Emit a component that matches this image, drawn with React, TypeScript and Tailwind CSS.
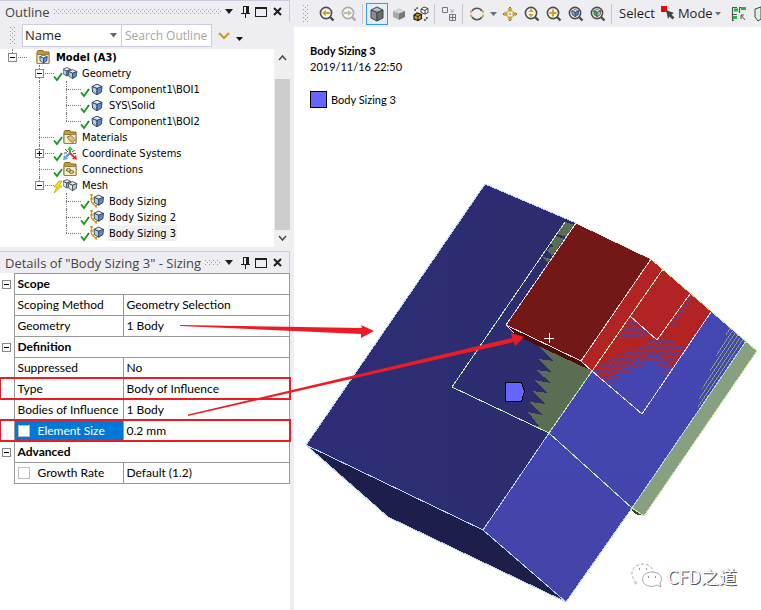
import React from "react";

const UI = "font-['Open_Sans','Noto_Sans',sans-serif]";
const PANEL = "font-['Lato','Noto_Sans_CJK_SC',sans-serif]";

function Grip() {
  return (
    <svg className="shrink-0" width="6" height="18" aria-hidden="true">
      <defs>
        <pattern id="grip" width="4" height="4" patternUnits="userSpaceOnUse">
          <rect width="1" height="1" fill="#999" />
          <rect x="2" y="2" width="1" height="1" fill="#999" />
        </pattern>
      </defs>
      <rect width="6" height="18" fill="url(#grip)" />
    </svg>
  );
}

function TitleBar({ title }: { title: string }) {
  return (
    <header className="flex h-[22px] items-center border-t border-r border-[#ccccdc] bg-[#eeeef2] pl-[5px] pr-1 text-[#444]">
      <h2 className={`${UI} text-[13px] leading-5 whitespace-nowrap`}>{title}</h2>
      <svg className="ml-1 h-[5px] min-w-0 flex-1" aria-hidden="true">
        <rect width="100%" height="5" fill="url(#grip)" />
      </svg>
      <div className="flex shrink-0 items-center text-[#1e1e1e]">
        <button type="button" aria-label="Window options" className="w-4 pl-1">
          <svg width="9" height="5"><path d="M0 0h8L4 5z" fill="currentColor" /></svg>
        </button>
        <button type="button" aria-label="Pin" className="w-4 pl-1">
          <svg width="9" height="12" shapeRendering="crispEdges">
            <path d="M2 0h6v7h1v1H5v4H4V8H0V7h2zM3 1v6h2V1z" fill="currentColor" fillRule="evenodd" />
          </svg>
        </button>
        <button type="button" aria-label="Maximize" className="w-4 pl-0.5">
          <svg width="12" height="10" shapeRendering="crispEdges">
            <path d="M0 0h12v10H0zM1 2v7h10V2z" fill="#1e1e1e" fillRule="evenodd" />
          </svg>
        </button>
        <button type="button" aria-label="Close" className="w-4 pl-1">
          <svg width="9" height="9"><path d="M1 1l7 7M8 1L1 8" stroke="currentColor" strokeWidth="2" /></svg>
        </button>
      </div>
    </header>
  );
}

function Cube({ x = 0, y = 0, s = 1, front = "#4f8fe8", side = "#a9cdf7", top = "#dcebfb" }) {
  return (
    <g transform={`translate(${x} ${y}) scale(${s})`} stroke="#3c4450" strokeWidth="1" strokeLinejoin="round">
      <path d="M1 3L6 .7 11 3 6 5z" fill={top} />
      <path d="M1 3L6 5v6.3L1.6 8.6z" fill={side} />
      <path d="M11 3L6 5v6.3L10.4 8.6z" fill={front} />
    </g>
  );
}

function Folder({ children }: { children: React.ReactNode }) {
  return (
    <>
      <path d="M1 13V2l1-1.500h5l1 1.500h5v11z" fill="#c79a2a" stroke="#8a6a1c" />
      <path d="M1 4.500h12V13.500H1z" fill="#f7edc0" stroke="#8f8250" />
      {children}
    </>
  );
}

function TreeIcon({ kind }: { kind: string }) {
  return (
    <svg className="w-[15px] shrink-0" width="15" height="15" aria-hidden="true">
      {kind === "model" && <Folder><Cube x={3} y={4.5} s={0.75} /></Folder>}
      {kind === "materials" && (
        <Folder><path d="M4 7l4-1.500 4 4-2 3-3-1.500z" fill="#efb680" stroke="#7d6540" strokeWidth=".8" /></Folder>
      )}
      {kind === "connections" && (
        <Folder>
          <ellipse cx="5.500" cy="8" rx="2.200" ry="1.400" fill="#e0cf98" stroke="#7d6a30" />
          <ellipse cx="8.500" cy="10" rx="2.200" ry="1.400" fill="#e0cf98" stroke="#7d6a30" />
        </Folder>
      )}
      {kind === "geometry" && <><Cube x={-1} y={1} s={0.8} /><Cube x={4.500} y={3} s={0.85} /></>}
      {kind === "mesh" && (
        <>
          <Cube x={-1} y={1} s={0.8} front="#b6c4d4" side="#d8e2ee" />
          <Cube x={4.500} y={3} s={0.85} front="#b6c4d4" side="#e2eaf2" />
        </>
      )}
      {kind === "solid" && <Cube x={1} y={1.5} />}
      {kind === "sizing" && (
        <>
          <path d="M1.500 0v8L7 13.500M0 1h3M0 5h3M2 10l2-1M5 13l2-2" fill="none" stroke="#c89b2c" strokeWidth="1.400" />
          <Cube x={3} y={0.5} s={0.95} />
        </>
      )}
      {kind === "axes" && (
        <>
          <path d="M7 7V3" stroke="#2fae3c" strokeWidth="2" />
          <path d="M4 4l3-4 3 4z" fill="#25d23a" />
          <path d="M7 7l-4 4" stroke="#4a8ee0" strokeWidth="2" />
          <path d="M0 14l1-5 4 4z" fill="#5aa0f2" />
          <path d="M7 7l4 4" stroke="#d33" strokeWidth="2" />
          <path d="M14 13.500L9 13l4-4z" fill="#e22" />
          <path d="M2 3l3 3M12 4L9 6M1 7h3M10 7.500h3" stroke="#555" />
        </>
      )}
    </svg>
  );
}

type Guide = "none" | "line" | "tee" | "end";
type Row = { name: string; icon: string; guides: Guide[]; toggle?: "+" | "-"; state?: "ok" | "bolt" };

const tree: Row[] = [
  { name: "Model (A3)", icon: "model", guides: ["end"], toggle: "-" },
  { name: "Geometry", icon: "geometry", guides: ["none", "tee"], toggle: "-", state: "ok" },
  { name: "Component1\\BOI1", icon: "solid", guides: ["none", "line", "tee"], state: "ok" },
  { name: "SYS\\Solid", icon: "solid", guides: ["none", "line", "tee"], state: "ok" },
  { name: "Component1\\BOI2", icon: "solid", guides: ["none", "line", "end"], state: "ok" },
  { name: "Materials", icon: "materials", guides: ["none", "tee"], state: "ok" },
  { name: "Coordinate Systems", icon: "axes", guides: ["none", "tee"], toggle: "+", state: "ok" },
  { name: "Connections", icon: "connections", guides: ["none", "tee"], state: "ok" },
  { name: "Mesh", icon: "mesh", guides: ["none", "end"], toggle: "-", state: "bolt" },
  { name: "Body Sizing", icon: "sizing", guides: ["none", "none", "tee"], state: "ok" },
  { name: "Body Sizing 2", icon: "sizing", guides: ["none", "none", "tee"], state: "ok" },
  { name: "Body Sizing 3", icon: "sizing", guides: ["none", "none", "end"], state: "ok" },
];

function Toggle({ sign, name }: { sign: "+" | "-"; name: string }) {
  return (
    <button type="button" aria-label={`Toggle ${name}`} className="block size-[9px] border border-[#888] bg-white">
      <svg width="7" height="7" className="block" shapeRendering="crispEdges">
        <path d={sign === "+" ? "M1 3h5v1H1zM3 1h1v5H3z" : "M1 3h5v1H1z"} fill="#000" />
      </svg>
    </button>
  );
}

function TreeRow({ row }: { row: Row }) {
  const root = row.guides.length === 1;
  const selected = row.name === "Body Sizing 3";
  return (
    <li className="flex h-4 items-center">
      {row.guides.map((g, i) => (
        <span key={i} className="relative h-4 w-[27px] shrink-0">
          {(g === "line" || g === "tee") && <span className="absolute top-0 left-3 h-4 border-l border-dotted border-[#777]" />}
          {g === "end" && <span className="absolute top-0 left-3 h-2 border-l border-dotted border-[#777]" />}
          {(g === "tee" || g === "end") && <span className="absolute top-2 right-0 left-3 border-t border-dotted border-[#777]" />}
          {row.toggle && i === row.guides.length - 1 && (
            <span className="absolute top-1 left-2"><Toggle sign={row.toggle} name={row.name} /></span>
          )}
        </span>
      ))}
      <svg className="w-[9px] shrink-0 overflow-visible" width="9" height="16" aria-hidden="true">
        {row.state === "ok" && <path d="M0 11.500l3 3.500L8 8" fill="none" stroke="#12941a" strokeWidth="1.800" />}
        {row.state === "bolt" && <path d="M5 4L0 10h3l-3 6 8-7H5l3-5z" fill="#ffe11a" stroke="#b89410" strokeWidth=".7" />}
      </svg>
      <TreeIcon kind={row.icon} />
      <span className={`ml-[3px] h-4 px-px leading-[18px] ${root ? "pl-0.5 font-bold" : ""} ${selected ? "bg-[#f0f0f0]" : ""}`}>{row.name}</span>
    </li>
  );
}

function Outline() {
  return (
    <section className="bg-[#eeeef2]">
      <TitleBar title="Outline" />
      <div className={`${UI} flex h-[27px] items-center pl-2.5 text-[13px] text-[#1e1e1e]`}>
        <Grip />
        <span className="relative ml-1.5 flex h-[23px] w-[100px] border border-[#ccccdc] bg-white">
          <select aria-label="Filter by" className="w-full appearance-none bg-white pl-0.5 outline-none">
            <option>Name</option>
          </select>
          <svg className="pointer-events-none absolute top-2 right-1" width="7" height="5"><path d="M0 0h7L3.500 4.500z" fill="#666" /></svg>
        </span>
        <input
          aria-label="Search Outline"
          placeholder="Search Outline"
          className="h-[23px] w-[90px] border border-l-0 border-[#ccccdc] bg-white pl-[3px] text-xs outline-none placeholder:text-[#a5a5a5]"
        />
        <button type="button" aria-label="Expand search" className="ml-1.5">
          <svg width="12" height="8"><path d="M1 1l5 5 5-5" fill="none" stroke="#cf9a14" strokeWidth="2" /></svg>
        </button>
        <button type="button" aria-label="More" className="ml-1.5 pt-1.5">
          <svg width="7" height="4"><path d="M0 0h7L3.500 4z" fill="#111" /></svg>
        </button>
      </div>
      <div className="flex bg-white">
        <ul className="min-w-0 flex-1 pb-1.5 font-['DejaVu_Sans_Condensed','Noto_Sans',sans-serif] text-[11px] text-black">
          {tree.map((row) => <TreeRow key={row.name} row={row} />)}
        </ul>
        <div className="flex w-4 shrink-0 flex-col items-center bg-[#f0f0f0] text-[#505050]">
          <svg width="15" height="30"><path d="M4 11l3.500-4L11 11" fill="none" stroke="currentColor" strokeWidth="1.600" /></svg>
          <div className="w-[15px] flex-1 bg-[#cdcdcd]" />
          <svg width="15" height="17"><path d="M4 6l3.500 4L11 6" fill="none" stroke="currentColor" strokeWidth="1.600" /></svg>
        </div>
      </div>
    </section>
  );
}

type Detail = { label: string; value?: string; box?: boolean; active?: boolean };
const details: Detail[] = [
  { label: "Scope" },
  { label: "Scoping Method", value: "Geometry Selection" },
  { label: "Geometry", value: "1 Body" },
  { label: "Definition" },
  { label: "Suppressed", value: "No" },
  { label: "Type", value: "Body of Influence" },
  { label: "Bodies of Influence", value: "1 Body" },
  { label: "Element Size", value: "0.2 mm", box: true, active: true },
  { label: "Advanced" },
  { label: "Growth Rate", value: "Default (1.2)", box: true },
];

function Details() {
  return (
    <section className="mt-1 bg-white">
      <TitleBar title={'Details of "Body Sizing 3" - Sizing'} />
      <table className={`${PANEL} w-full table-fixed border-collapse text-xs leading-5 text-black`}>
        <colgroup>
          <col className="w-[14px]" />
          <col className="w-[109px]" />
          <col />
        </colgroup>
        <tbody>
          {details.map((d) => (
            <tr key={d.label} className="h-[21px]">
              <td className="p-0">
                {!d.value && <span className="ml-0.5 block"><Toggle sign="-" name={d.label} /></span>}
              </td>
              {d.value ? (
                <>
                  <th scope="row" className={`border border-[#999] p-0 text-left font-normal whitespace-nowrap ${d.active ? "bg-[#0078d7] text-white" : ""}`}>
                    {d.box ? (
                      <label className="flex h-5 items-center gap-2 pl-[3px]">
                        <input type="checkbox" className="size-3 appearance-none border border-[#bbb] bg-white" />
                        {d.label}
                      </label>
                    ) : (
                      <span className="block h-5 pl-[3px]">{d.label}</span>
                    )}
                  </th>
                  <td className="border border-[#999] p-0 pl-[3px]">{d.value}</td>
                </>
              ) : (
                <th colSpan={2} scope="rowgroup" className="border border-[#999] p-0 pl-[3px] text-left font-bold">{d.label}</th>
              )}
            </tr>
          ))}
        </tbody>
      </table>
    </section>
  );
}

function Tool({ label, active, children }: { label: string; active?: boolean; children: React.ReactNode }) {
  return (
    <button
      type="button"
      aria-label={label}
      className={`flex h-[22px] w-[22px] shrink-0 items-center justify-center ${active ? "border border-[#3399ff] bg-[#e4eefb]" : ""}`}
    >
      <svg width="16" height="16" className="shrink-0">{children}</svg>
    </button>
  );
}

function Sep() {
  return <span className="mr-[3px] ml-0.5 h-5 w-px shrink-0 bg-[#c4c6d0]" />;
}

function Lens({ color = "#4b4b4b", children }: { color?: string; children: React.ReactNode }) {
  return (
    <>
      <circle cx="7" cy="7" r="5.600" fill="#faf6ea" stroke={color} strokeWidth="1.600" />
      <path d="M11 11l3.500 3.500" stroke={color} strokeWidth="2.400" />
      {children}
    </>
  );
}

function Toolbar() {
  return (
    <div className={`${UI} flex h-[27px] items-center overflow-hidden bg-[#eeeef2] pl-[9px] text-[13px] text-[#1e1e1e]`}>
      <Grip />
      <span className="w-[7px] shrink-0" />
      <Tool label="Previous view"><Lens><path d="M3 7l4-3v2h4v2H7v2z" fill="#d3a021" /></Lens></Tool>
      <Tool label="Next view"><Lens color="#aaa"><path d="M11 7L7 4v2H3v2h4v2z" fill="#bbb" /></Lens></Tool>
      <Sep />
      <Tool label="Shaded with edges" active>
        <path d="M2 4l6-3 6 3-6 2.500z" fill="#bbb" stroke="#444" />
        <path d="M2 4l6 2.500V15l-6-3z" fill="#8c8c8c" stroke="#444" />
        <path d="M14 4L8 6.500V15l6-3z" fill="#6a6a6a" stroke="#444" />
      </Tool>
      <Tool label="Shaded">
        <path d="M2 5l6-3 6 3-6 2.500z" fill="#d5d5d5" />
        <path d="M2 5l6 2.500V14l-6-3z" fill="#aaa" />
        <path d="M14 5L8 7.500V14l6-3z" fill="#777" />
      </Tool>
      <Tool label="Wireframe">
        <path d="M8 3l3-2 4 1.500v4L12 8 8 6.500zM8 3l4 1.500 3-2M12 4.500V8" fill="#fff" stroke="#444" />
        <path d="M1 9l3-2 4.500 1.500v4L5 14.500 1 13z" fill="#d3a021" stroke="#222" strokeWidth="1.200" />
        <path d="M1 9l4 1.500 3.500-2M5 10.500v4" fill="none" stroke="#222" />
        <path d="M2 5q0-3 3-3M14 11q0 3-3 3" fill="none" stroke="#444" strokeWidth="1.500" strokeDasharray="2 1" />
      </Tool>
      <Sep />
      <Tool label="Show mesh">
        <path d="M1.500 1.500h5v5h-5zM8.500 8.500h6v6h-6zM11.500 8.500v6M8.500 11.500h6" fill="none" stroke="#777" />
        <path d="M9 3l3 3M12 3.500V6H9.500" fill="none" stroke="#aaa" />
      </Tool>
      <Sep />
      <Tool label="Rotate">
        <path d="M3 5a6 6 0 0 1 10 0" fill="none" stroke="#555" strokeWidth="1.600" />
        <path d="M3 11a6 6 0 0 0 10 0" fill="none" stroke="#555" strokeWidth="1.600" />
        <path d="M2 4.500v7M14 4.500v7" stroke="#d3a021" strokeWidth="1.600" strokeDasharray="2.500 1.500" />
      </Tool>
      <svg className="mx-[2px] shrink-0" width="7" height="4"><path d="M0 0h7L3.500 4z" fill="#66707e" /></svg>
      <Tool label="Pan">
        <path d="M8 1l3 4.500H5zM8 15l3-4.500H5zM1 8l4.500-3v6zM15 8l-4.500-3v6z" fill="#d3a021" />
        <path d="M6.500 2.500L8 1l1.500 1.500M6.500 13.500L8 15l1.500-1.500M2.500 6.500L1 8l1.500 1.500M13.500 6.500L15 8l-1.500 1.500M7 8h2" stroke="#777" fill="none" />
      </Tool>
      <Tool label="Zoom"><Lens><path d="M7 2.500L9.500 6h-5zM7 11.500L4.500 8h5z" fill="#d3a021" /></Lens></Tool>
      <Tool label="Box zoom"><Lens><path d="M7 3.500v7M3.500 7h7" stroke="#d3a021" strokeWidth="2" /></Lens></Tool>
      <Tool label="Zoom to fit"><Lens><Cube x={3} y={2.800} s={0.7} front="#3f7fc5" side="#6ea4dd" /></Lens></Tool>
      <Tool label="Look at"><Lens><Cube x={3} y={2.800} s={0.7} front="#bbb" side="#1fc43a" /></Lens></Tool>
      <Sep />
      <span className="ml-1 shrink-0">Select</span>
      <button type="button" className="ml-1.5 flex shrink-0 items-center">
        <svg width="15" height="15">
          <path d="M0 0h6v6H0z" fill="#f00" />
          <path d="M5 4l8 3-2.500 1.500 3 3-2 2-3-3L7 13z" fill="#444" />
        </svg>
        <span className="ml-0.5">Mode</span>
        <svg className="ml-0.5" width="6" height="4"><path d="M0 0h6L3 3.500z" fill="#66707e" /></svg>
      </button>
      <span className="w-[7px] shrink-0" />
      <Tool label="Select by faces">
        <path d="M1.500 2v13M8.500 2v5M1 1.500h5M8 1.500h3M1 8.500h5M1 14.500h2M3 4h3" stroke="#555" fill="none" strokeWidth="1.200" />
        <path d="M3 2.500h4v3H3zM10 1h5v3h-5zM2 10h4v3H2z" fill="#0fc52a" />
        <path d="M10 9l4 5M10 9v4M10 9h3" stroke="#555" />
      </Tool>
      <Tool label="Select bodies"><path d="M2 3l6-2v12l-3 2-3-4z" fill="#dff2df" stroke="#444" /></Tool>
    </div>
  );
}

function Scene() {
  return (
    <svg className="absolute top-0 left-0" width="467" height="583" viewBox="294 27 467 583" shapeRendering="crispEdges" role="img" aria-label="Body sizing model">
      <defs>
        <linearGradient id="deep" x1="0" x2="1"><stop offset="0" stopColor="#2e2e78" /><stop offset="1" stopColor="#2c2c6c" /></linearGradient>
        <linearGradient id="bright" x1="0" x2="0" y1="0" y2="1"><stop offset="0" stopColor="#4747b6" /><stop offset="1" stopColor="#4343a8" /></linearGradient>
        <pattern id="blueDots" width="4" height="6" patternUnits="userSpaceOnUse">
          <path d="M0 0h1v2H0zM3 2h1v1H3zM2 3h1v2H2zM1 5h1v1H1z" fill="#4747b6" />
        </pattern>
        <pattern id="redDots" width="4" height="6" patternUnits="userSpaceOnUse">
          <path d="M0 0h1v2H0zM3 2h1v1H3zM2 3h1v2H2zM1 5h1v1H1z" fill="#b22424" />
        </pattern>
        <pattern id="greenDots" width="4" height="6" patternUnits="userSpaceOnUse">
          <path d="M0 0h1v2H0zM3 2h1v1H3zM2 3h1v2H2zM1 5h1v1H1z" fill="#8aa481" />
        </pattern>
      </defs>
      <path d="M485 184L576 223 592 371 549 433 483 530 306 445z" fill="url(#deep)" />
      <path d="M306 445l177 85 83 72-178-85z" fill="#1e1e4a" />
      <path d="M592 371L663 269 746 341 632 508 566 602 483 530z" fill="url(#bright)" />
      <path d="M746 341l11 10-113 165-12-8z" fill="#88a080" />
      <path d="M632 508l12 8-9-2-4-4z" fill="#37462f" />
      <path d="M565 222l10 3-8 12-10-3zM556 236l8 3-8 11-5-7zM551 247l7 1-6 8-5-6zM543 257l8 2-4 3z" fill="#5b6d52" />
      <path d="M539 347l15 14-16-2 14 13-16-2 15 13-17-3 14 13-16-2 14 13-16-2 12 13-14-3 11 14-6-1 16 8 43-62-45-26z" fill="#5b6d52" />
      <path d="M576 223l75 36-70 102-75-36z" fill="#741717" />
      <path d="M506 325l75 36 11 10-77-36z" fill="#4a0d0d" />
      <path d="M651 259l60 53-38 54-13-10-10-1-25 11-20 15-13-9-11-10z" fill="#b22424" />
      <path d="M631 317l20 17-14 5-18 0z" fill="url(#blueDots)" />
      <path d="M592 371l22-14 22-9 14-8 14-3 20 9-11 20-13-10-10-1-25 11-20 15-8-5z" fill="url(#blueDots)" />
      <path d="M605 381l20-15 25-11 10 1 13 10-5 8-14-10-8 0-24 12-12 8z" fill="url(#redDots)" />
      <path d="M690 294l4 3-20 28-5 2z" fill="url(#blueDots)" />
      <path d="M729 328l17 14-50 74 4-22 18-42z" fill="url(#greenDots)" />
      <g fill="none" strokeWidth="1">
        <path d="M576 223L485 184 306 445l82 72 178 85 66-94 114-167M306 445l177 85 83 72M483 530l66-97" stroke="#b9d3ff" />
        <path d="M565 222L452 387l97 46 83 75 12 8 113-165-106-92M549 433L663 269" stroke="#c5edb0" />
        <path d="M576 223l75 36-70 102-75-36zM581 361l11 10 50 43 69-102M506 325l8 8M630 316l27 24 33-46" stroke="#fff" strokeOpacity=".85" />
      </g>
      <path d="M505.500 382.500h16l3 9-3 10h-16z" fill="#6666ff" stroke="#000" />
      <path d="M544 338.500h10M549.500 333v10" stroke="#fff" />
    </svg>
  );
}

function Viewport() {
  return (
    <main className="flex min-w-0 flex-1 flex-col bg-white">
      <Toolbar />
      <div className={`${PANEL} relative flex-1 overflow-hidden`}>
        <Scene />
        <div className="relative pt-4 pl-4 text-[11px] leading-4 text-black">
          <h1 className="font-bold">Body Sizing 3</h1>
          <p>2019/11/16 22:50</p>
          <p className="mt-4 flex items-center gap-1">
            <span className="size-[17px] border border-black bg-[#6666ff]" />
            Body Sizing 3
          </p>
        </div>
        <div className="absolute right-6 bottom-[21px] flex items-center gap-1">
          <svg width="32" height="26" fill="#fff" stroke="#aaa" strokeWidth="1" aria-hidden="true">
            <path d="M6 19l-2 3v-5C-3 10 3 1 12 1c6 0 10 4 10 8" strokeDasharray="3 2" />
            <path d="M29 20c4-5 0-11-8-11-11 0-13 12-3 14 3 1 6 0 8-1l4 2z" />
            <path d="M8 6h1M15 6h1M17 14h1M24 14h1" stroke="#777" strokeWidth="1.500" />
          </svg>
          <span className="font-['Noto_Sans_CJK_SC',sans-serif] text-lg leading-6 text-white [text-shadow:1px_1px_0_#555,0_0_1px_#bbb]">CFD之道</span>
        </div>
      </div>
    </main>
  );
}

function Annotations() {
  return (
    <svg className="pointer-events-none absolute top-0 left-0" width="761" height="610" aria-hidden="true">
      <g fill="none" stroke="#ed1c24" strokeWidth="2">
        <path d="M0 378h290v21H0zM0 420h290v21H0z" />
      </g>
      <path d="M180 325l182 3-1-3 13 6-13 7v-4l-181-8zM188 414.500L512 338l-1-5 13 4-9 9-1-4-326 74z" fill="#ed1c24" />
    </svg>
  );
}

export default function App() {
  return (
    <div className="relative flex min-h-screen overflow-hidden bg-white">
      <aside className="w-[290px] shrink-0 bg-white">
        <div className="bg-[#eeeef2]"><Outline /><Details /></div>
      </aside>
      <div className="w-1 shrink-0 bg-[#eeeef2]" />
      <Viewport />
      <Annotations />
    </div>
  );
}
